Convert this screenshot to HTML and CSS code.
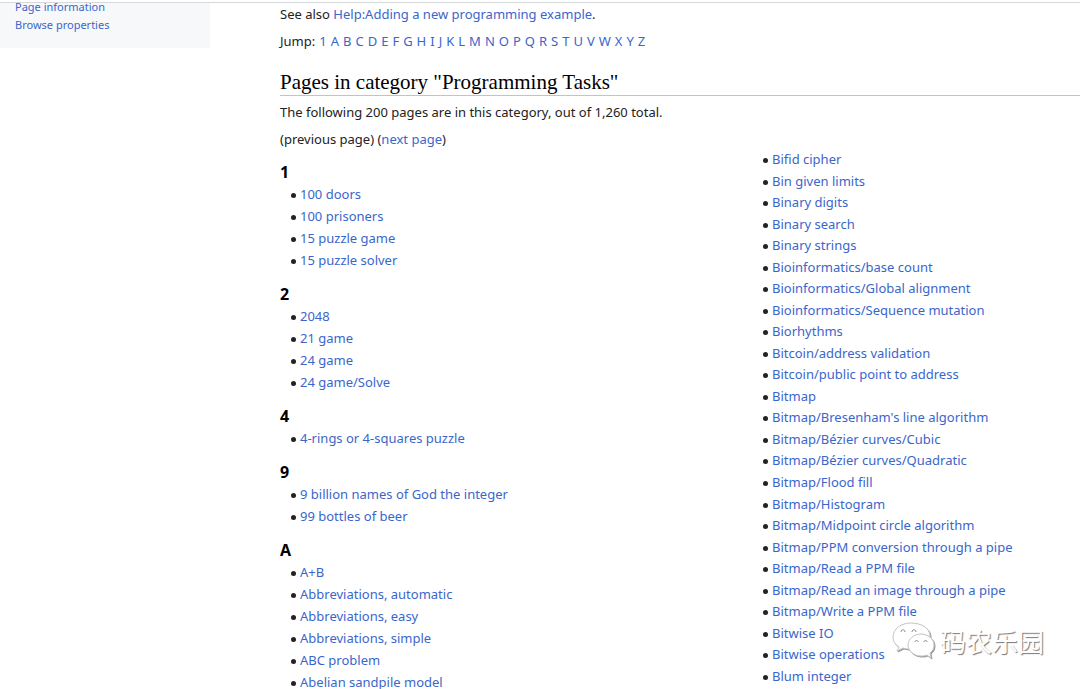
FILE: index.html
```html
<!DOCTYPE html>
<html lang="en">
<head>
<meta charset="utf-8">
<meta name="viewport" content="width=device-width, initial-scale=1">
<title>Category:Programming Tasks</title>
<link rel="stylesheet" href="styles.css">
</head>
<body>
<div class="page">
  <nav class="sidebar" aria-label="Tools">
    <a href="#info">Page information</a>
    <a href="#props">Browse properties</a>
  </nav>
  <main class="content">
    <p>See also <a href="#help">Help:Adding a new programming example</a>.</p>
    <p class="jump">Jump: <a href="#1">1</a> <a href="#A">A</a> <a href="#B">B</a> <a href="#C">C</a> <a href="#D">D</a> <a href="#E">E</a> <a href="#F">F</a> <a href="#G">G</a> <a href="#H">H</a> <a href="#I">I</a> <a href="#J">J</a> <a href="#K">K</a> <a href="#L">L</a> <a href="#M">M</a> <a href="#N">N</a> <a href="#O">O</a> <a href="#P">P</a> <a href="#Q">Q</a> <a href="#R">R</a> <a href="#S">S</a> <a href="#T">T</a> <a href="#U">U</a> <a href="#V">V</a> <a href="#W">W</a> <a href="#X">X</a> <a href="#Y">Y</a> <a href="#Z">Z</a></p>
    <h2>Pages in category "Programming Tasks"</h2>
    <p>The following 200 pages are in this category, out of 1,260 total.</p>
    <p class="pager">(previous page) (<a href="#next">next page</a>)</p>
    <div class="columns">
      <div class="groups">
        <section>
          <h3 id="1">1</h3>
          <ul>
            <li><a href="#p">100 doors</a></li>
            <li><a href="#p">100 prisoners</a></li>
            <li><a href="#p">15 puzzle game</a></li>
            <li><a href="#p">15 puzzle solver</a></li>
          </ul>
        </section>
        <section>
          <h3>2</h3>
          <ul>
            <li><a href="#p">2048</a></li>
            <li><a href="#p">21 game</a></li>
            <li><a href="#p">24 game</a></li>
            <li><a href="#p">24 game/Solve</a></li>
          </ul>
        </section>
        <section>
          <h3>4</h3>
          <ul>
            <li><a href="#p">4-rings or 4-squares puzzle</a></li>
          </ul>
        </section>
        <section>
          <h3>9</h3>
          <ul>
            <li><a href="#p">9 billion names of God the integer</a></li>
            <li><a href="#p">99 bottles of beer</a></li>
          </ul>
        </section>
        <section>
          <h3 id="A">A</h3>
          <ul>
            <li><a href="#p">A+B</a></li>
            <li><a href="#p">Abbreviations, automatic</a></li>
            <li><a href="#p">Abbreviations, easy</a></li>
            <li><a href="#p">Abbreviations, simple</a></li>
            <li><a href="#p">ABC problem</a></li>
            <li><a href="#p">Abelian sandpile model</a></li>
          </ul>
        </section>
      </div>
      <ul class="continued">
        <li><a href="#p">Bifid cipher</a></li>
        <li><a href="#p">Bin given limits</a></li>
        <li><a href="#p">Binary digits</a></li>
        <li><a href="#p">Binary search</a></li>
        <li><a href="#p">Binary strings</a></li>
        <li><a href="#p">Bioinformatics/base count</a></li>
        <li><a href="#p">Bioinformatics/Global alignment</a></li>
        <li><a href="#p">Bioinformatics/Sequence mutation</a></li>
        <li><a href="#p">Biorhythms</a></li>
        <li><a href="#p">Bitcoin/address validation</a></li>
        <li><a href="#p">Bitcoin/public point to address</a></li>
        <li><a href="#p">Bitmap</a></li>
        <li><a href="#p">Bitmap/Bresenham's line algorithm</a></li>
        <li><a href="#p">Bitmap/Bézier curves/Cubic</a></li>
        <li><a href="#p">Bitmap/Bézier curves/Quadratic</a></li>
        <li><a href="#p">Bitmap/Flood fill</a></li>
        <li><a href="#p">Bitmap/Histogram</a></li>
        <li><a href="#p">Bitmap/Midpoint circle algorithm</a></li>
        <li><a href="#p">Bitmap/PPM conversion through a pipe</a></li>
        <li><a href="#p">Bitmap/Read a PPM file</a></li>
        <li><a href="#p">Bitmap/Read an image through a pipe</a></li>
        <li><a href="#p">Bitmap/Write a PPM file</a></li>
        <li><a href="#p">Bitwise IO</a></li>
        <li><a href="#p">Bitwise operations</a></li>
        <li><a href="#p">Blum integer</a></li>
      </ul>
    </div>
  </main>
</div>
<div class="watermark">
  <svg width="44" height="38" viewBox="0 0 44 38" aria-hidden="true">
    <g fill="#fff" stroke="#c4c4c4" stroke-width="1" stroke-linejoin="round">
      <path class="bubble" d="M19 1C9 1 1 7 1 15c0 5 3 8 6 10l-2 4 6-3c3 1 6 1 9 1 9 0 18-5 18-13S29 1 19 1z"/>
      <path class="bubble" d="M29 12c-7 0-13 5-13 11s6 11 13 11c2 0 4 0 6-1l4 3-1-5c3-2 4-5 4-8 0-6-6-11-13-11z"/>
    </g>
    <path d="M9 10c0-3 4-3 4 0M20 10c0-3 4-3 4 0M23 20c0-2 3-2 3 0M32 20c0-2 3-2 3 0" fill="none" stroke="#888"/>
  </svg>
  <span lang="zh">码农乐园</span>
</div>
</body>
</html>
```
FILE: styles.css
```css
* { box-sizing: border-box; }

html { scrollbar-width: none; }

body {
  margin: 0;
  padding-top: 2px;
  background: #fff;
  color: #222;
  font: 13px/21px "Noto Sans", "Open Sans", sans-serif;
}

a { color: #3a66cc; text-decoration: none; }
a:hover { text-decoration: underline; }

.page {
  display: grid;
  grid-template-columns: 210px minmax(0, 1fr);
  column-gap: 70px;
  align-items: start;
  overflow: hidden;
  border-top: 1px solid #d5d9dc;
}

.sidebar {
  display: flex;
  flex-direction: column;
  padding: 0 15px 14px;
  background: #f6f8fa;
  font-size: 11px;
  line-height: 18px;
  margin-top: -5px;
}

.content { padding-top: 1px; }

p { margin: 0 0 6px; }

.jump {
  display: flex;
  flex-wrap: wrap;
  column-gap: 4px;
}

h2 {
  margin: 17px 0 6px;
  border-bottom: 1px solid #c0c4c9;
  color: #000;
  font: 21px/26px "Liberation Serif", serif;
}

.pager {
  margin: 0;
  line-height: 20px;
}

.columns {
  display: grid;
  grid-template-columns: 59fr 41fr;
}

.groups {
  display: flex;
  flex-direction: column;
  gap: 11px;
  padding-top: 11px;
}

h3 {
  margin: 0;
  color: #000;
  font-size: 16px;
  line-height: 24px;
}

ul {
  display: flex;
  flex-direction: column;
  gap: 1px;
  margin: 0;
  padding: 0 0 0 20px;
  list-style: none;
}

li::before {
  content: "";
  display: inline-block;
  width: 5px;
  height: 5px;
  margin: 0 4px 1px -9px;
  border-radius: 50%;
  background: #222;
}

.continued {
  gap: 0;
  justify-content: space-between;
  padding-bottom: 6px;
}

.watermark {
  position: absolute;
  top: 622px;
  right: 36px;
  display: flex;
  align-items: center;
  gap: 4px;
  color: #fff;
  font: 26px/38px "Noto Sans CJK SC", sans-serif;
  text-shadow: 1px 1px 1px #777;
}

.bubble { filter: drop-shadow(1px 1px 0 #999); }
```
